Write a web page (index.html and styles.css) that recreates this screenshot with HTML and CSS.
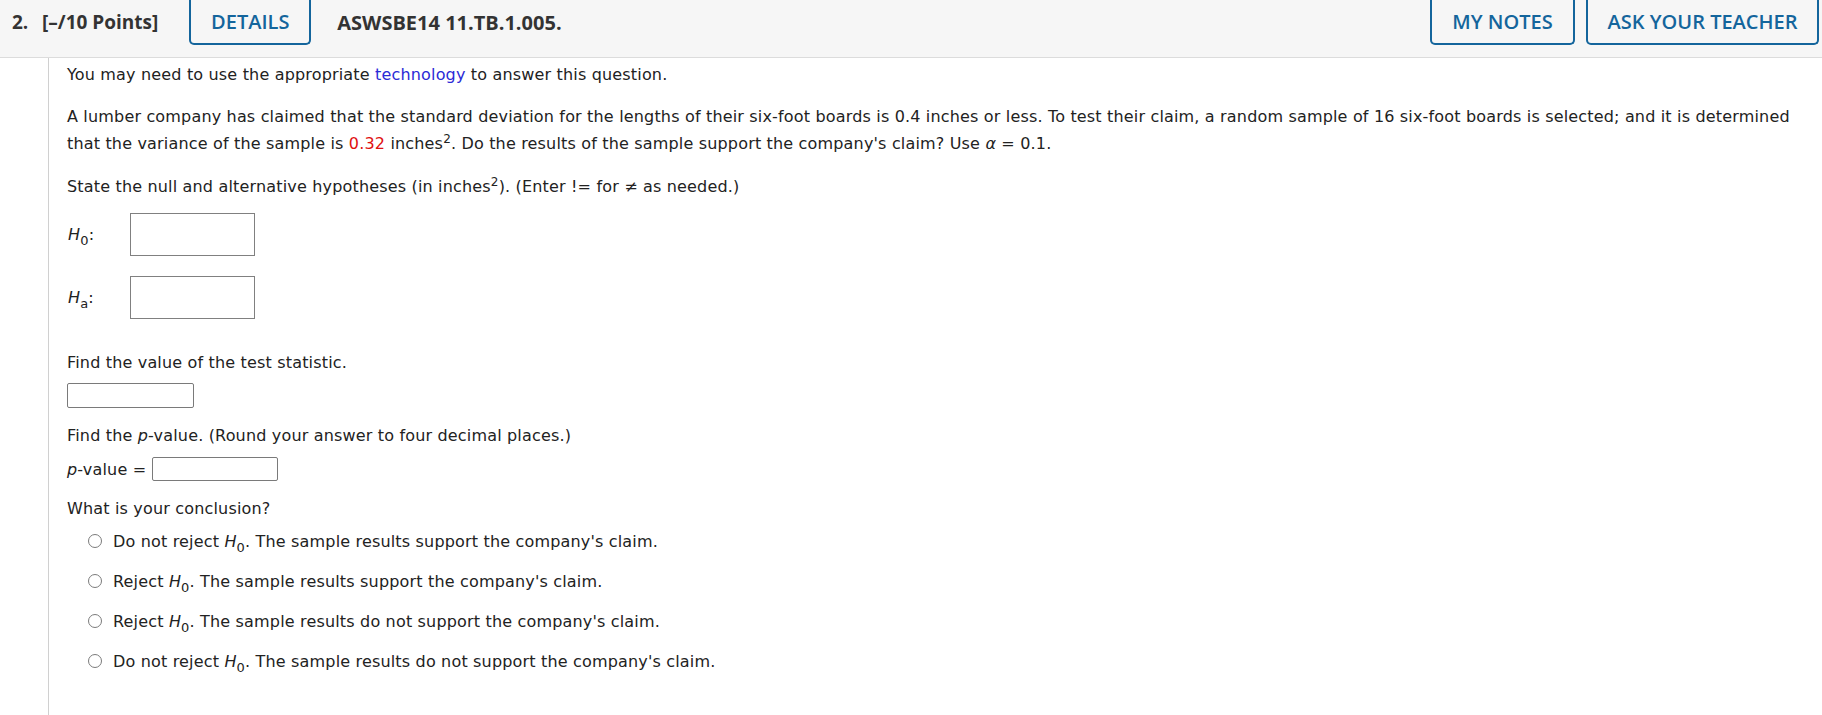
FILE: index.html
```html
<!DOCTYPE html>
<html>
<head>
<meta charset="utf-8">
<link rel="stylesheet" href="styles.css">
</head>
<body>
<div class="header">
  <div class="qnum">2.</div>
  <div class="points">[–/10 Points]</div>
  <div class="btn btn-details">DETAILS</div>
  <div class="code">ASWSBE14 11.TB.1.005.</div>
  <div class="spacer"></div>
  <div class="btn btn-notes">MY NOTES</div>
  <div class="btn btn-ask">ASK YOUR TEACHER</div>
</div>
<div class="main">
  <div class="gutter"></div>
  <div class="content">
    <p class="p1">You may need to use the appropriate <span class="link">technology</span> to answer this question.</p>
    <p class="p2">A lumber company has claimed that the standard deviation for the lengths of their six-foot boards is 0.4 inches or less. To test their claim, a random sample of 16 six-foot boards is selected; and it is determined that the variance of the sample is <span class="red">0.32</span> inches<sup>2</sup>. Do the results of the sample support the company's claim? Use <i>α</i> = 0.1.</p>
    <p class="p3">State the null and alternative hypotheses (in inches<sup>2</sup>). (Enter != for ≠ as needed.)</p>
    <div class="hrow hrow0">
      <span class="hlabel"><i>H</i><sub>0</sub>:</span>
      <span class="hbox"></span>
    </div>
    <div class="hrow hrowa">
      <span class="hlabel"><i>H</i><sub>a</sub>:</span>
      <span class="hbox"></span>
    </div>
    <p class="p4">Find the value of the test statistic.</p>
    <div class="box stat"></div>
    <p class="p5">Find the <i>p</i>-value. (Round your answer to four decimal places.)</p>
    <div class="prow"><span><i>p</i>-value =</span><span class="box pbox"></span></div>
    <p class="p6">What is your conclusion?</p>
    <div class="options">
      <div class="opt"><span class="radio"></span><span>Do not reject <i>H</i><sub>0</sub>. The sample results support the company's claim.</span></div>
      <div class="opt"><span class="radio"></span><span>Reject <i>H</i><sub>0</sub>. The sample results support the company's claim.</span></div>
      <div class="opt"><span class="radio"></span><span>Reject <i>H</i><sub>0</sub>. The sample results do not support the company's claim.</span></div>
      <div class="opt"><span class="radio"></span><span>Do not reject <i>H</i><sub>0</sub>. The sample results do not support the company's claim.</span></div>
    </div>
  </div>
</div>
</body>
</html>
```
FILE: styles.css
```css
html, body {
  margin: 0;
  padding: 0;
  background: #fff;
}
body {
  font-family: "DejaVu Sans", Verdana, sans-serif;
  font-size: 16px;
  letter-spacing: 0.17px;
  color: #222;
  height: 715px;
  overflow: hidden;
}
.header {
  display: flex;
  align-items: flex-start;
  height: 58px;
  background: #f6f6f6;
  border-bottom: 1px solid #dcdcdc;
  box-sizing: border-box;
  font-family: "Open Sans", sans-serif;
  font-weight: 700;
  font-size: 19px;
  letter-spacing: 0;
  color: #333;
}
.qnum, .points, .code {
  height: 45px;
  line-height: 45px;
}
.qnum { margin-left: 12px; width: 30px; }
.code { margin-left: 26px; font-size: 20px; }
.spacer { flex: 1; }
.btn {
  height: 45px;
  box-sizing: border-box;
  border: 2px solid #14659c;
  border-top: none;
  border-radius: 0 0 5px 5px;
  color: #14659c;
  font-weight: 600;
  font-size: 20px;
  display: flex;
  align-items: center;
  justify-content: center;
}
.btn-details { margin-left: 31px; width: 122px; }
.btn-notes { width: 145px; }
.btn-ask { width: 233px; margin-left: 11px; margin-right: 3px; }
.main {
  display: flex;
  height: 657px;
}
.gutter {
  width: 48px;
  border-right: 1px solid #d0d0d0;
  flex: none;
}
.content {
  padding-left: 18px;
  padding-right: 15px;
  padding-top: 6px;
  flex: 1;
}
p { margin: 0; line-height: 22px; }
.link { color: #2b2bd6; }
.red { color: #e01010; }
sup { font-size: 12px; line-height: 0; vertical-align: 6px; }
sub { font-size: 13px; line-height: 0; vertical-align: -5px; }
.p2 { margin-top: 17px; line-height: 27px; }
.p3 { margin-top: 19px; }
.hrow {
  display: flex;
  align-items: center;
}
.hrow0 { margin-top: 15px; }
.hrowa { margin-top: 20px; }
.hlabel { width: 62px; padding-left: 1px; }
.hbox {
  width: 125px;
  height: 43px;
  box-sizing: border-box;
  border: 1px solid #808080;
}
.p4 { margin-top: 33px; }
.box {
  box-sizing: border-box;
  border: 1px solid #7a7a7a;
  border-radius: 2px;
}
.stat { width: 127px; height: 25px; margin-top: 9px; }
.p5 { margin-top: 17px; }
.prow {
  display: flex;
  align-items: center;
  margin-top: 10px;
}
.pbox { width: 126px; height: 24px; margin-left: 6px; }
.p6 { margin-top: 17px; }
.options { padding-left: 21px; margin-top: 10px; }
.opt {
  display: flex;
  align-items: center;
  height: 22px;
  margin-bottom: 18px;
}
.radio {
  width: 14px;
  height: 14px;
  box-sizing: border-box;
  border: 1.5px solid #7b7b7b;
  border-radius: 50%;
  margin-right: 11px;
  flex: none;
}
```
